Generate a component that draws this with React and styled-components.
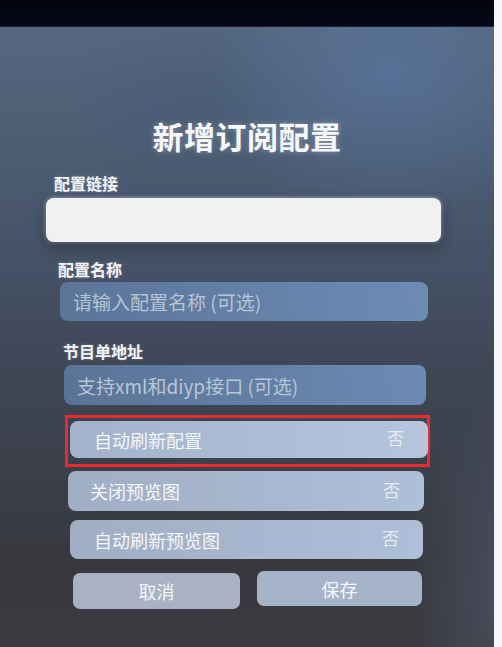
import React from "react";
import styled, { createGlobalStyle } from "styled-components";

const Global = createGlobalStyle`
  html, body { margin: 0; padding: 0; background: #ffffff; }
  body { font-family: "Noto Sans CJK SC", "Noto Sans", sans-serif; }
  #root { width: 502px; height: 647px; }
`;

const Page = styled.div`
  display: flex;
  width: 502px;
  height: 647px;
  overflow: hidden;
`;

const Tv = styled.div`
  width: 494px;
  display: flex;
  flex-direction: column;
`;

const Bezel = styled.div`
  height: 26px;
  background: linear-gradient(to bottom, #03030f, #070818);
  border-bottom: 1px solid #1a1c2c;
`;

const Screen = styled.div`
  flex: 1;
  display: flex;
  flex-direction: column;
  background:
    radial-gradient(ellipse 260px 200px at 390px 50px, rgba(92, 124, 176, 0.5), rgba(92, 124, 176, 0) 70%),
    radial-gradient(ellipse 200px 160px at 200px 80px, rgba(60, 84, 112, 0.3), rgba(60, 84, 112, 0) 70%),
    radial-gradient(ellipse 160px 280px at 520px 560px, rgba(96, 110, 140, 0.45), rgba(96, 110, 140, 0) 70%),
    linear-gradient(to bottom, #55687f 0%, #4a5a70 25%, #3f4757 55%, #38393f 85%, #3a3a40 100%);
`;

const Title = styled.h1`
  margin: 89px 0 0 0;
  text-align: center;
  font-size: 31px;
  line-height: 40px;
  font-weight: 700;
  color: #f7f8fb;
  letter-spacing: 0.5px;
  text-shadow: 0 0 6px rgba(255, 255, 255, 0.35);
`;

const Label = styled.div`
  margin: ${(p) => p.$top}px 0 0 ${(p) => p.$left}px;
  font-size: 16px;
  line-height: 20px;
  font-weight: 700;
  color: #f3f4f7;
  text-shadow: 0 0 3px rgba(255, 255, 255, 0.3);
`;

const Input = styled.div`
  margin: ${(p) => p.$top}px 0 0 ${(p) => p.$left}px;
  width: ${(p) => p.$width}px;
  height: ${(p) => p.$height}px;
  box-sizing: border-box;
  border-radius: 8px;
  display: flex;
  align-items: center;
  padding-left: 13px;
  font-size: 19px;
  color: #b9c5d6;
  background: ${(p) =>
    p.$focused
      ? "#f1f1f3"
      : "linear-gradient(to right, rgba(100, 130, 172, 0.75), rgba(116, 150, 196, 0.85))"};
  box-shadow: ${(p) =>
    p.$focused ? "0 6px 14px rgba(20, 28, 40, 0.45), 0 0 4px rgba(255,255,255,0.6)" : "none"};
`;

const Focus = styled.div`
  margin: 10px 0 0 65px;
  width: 365px;
  height: 52px;
  box-sizing: border-box;
  border: 3px solid #ec2a2d;
  padding: 3px 2px 0 0;
`;

const Row = styled.div`
  margin: ${(p) => p.$top}px 0 0 ${(p) => p.$left}px;
  width: ${(p) => p.$width}px;
  height: ${(p) => p.$height}px;
  box-sizing: border-box;
  border-radius: 8px;
  display: flex;
  align-items: center;
  justify-content: space-between;
  padding: 0 24px 0 ${(p) => p.$pad}px;
  background: ${(p) =>
    p.$active
      ? "linear-gradient(to right, #a3b3cb, #b5c5de)"
      : "linear-gradient(to right, #a0aec4, #aebfd8)"};
  color: #f4f6fa;
  font-size: 18px;
`;

const Value = styled.span`
  font-size: 17px;
  color: #e6eaf1;
  margin-top: -4px;
`;

const Buttons = styled.div`
  display: flex;
  gap: 17px;
  margin: 12px 0 0 73px;
  align-items: flex-start;
`;

const Button = styled.div`
  width: ${(p) => p.$width}px;
  height: ${(p) => p.$height}px;
  margin-top: ${(p) => p.$top}px;
  border-radius: 7px;
  background: ${(p) => p.$bg};
  color: #f4f6fa;
  font-size: 18px;
  display: flex;
  align-items: center;
  justify-content: center;
`;

const Edge = styled.div`
  width: 8px;
  background: #f6f7fb;
`;

export default function App() {
  return (
    <>
      <Global />
      <Page>
        <Tv>
          <Bezel />
          <Screen>
            <Title>新增订阅配置</Title>
            <Label $top={17} $left={54}>配置链接</Label>
            <Input $focused $top={5} $left={46} $width={395} $height={44} />
            <Label $top={17} $left={58}>配置名称</Label>
            <Input $top={3} $left={60} $width={368} $height={39}>
              请输入配置名称 (可选)
            </Input>
            <Label $top={20} $left={63}>节目单地址</Label>
            <Input $top={4} $left={64} $width={362} $height={40}>
              支持xml和diyp接口 (可选)
            </Input>
            <Focus>
              <Row $active $top={0} $left={2} $width={358} $height={37} $pad={24}>
                <span>自动刷新配置</span>
                <Value>否</Value>
              </Row>
            </Focus>
            <Row $top={4} $left={68} $width={356} $height={40} $pad={22}>
              <span>关闭预览图</span>
              <Value>否</Value>
            </Row>
            <Row $top={9} $left={70} $width={353} $height={39} $pad={24}>
              <span>自动刷新预览图</span>
              <Value>否</Value>
            </Row>
            <Buttons>
              <Button $width={167} $height={36} $top={2} $bg="#a8b2c4">取消</Button>
              <Button $width={165} $height={35} $top={0} $bg="#a6b4ca">保存</Button>
            </Buttons>
          </Screen>
        </Tv>
        <Edge />
      </Page>
    </>
  );
}
